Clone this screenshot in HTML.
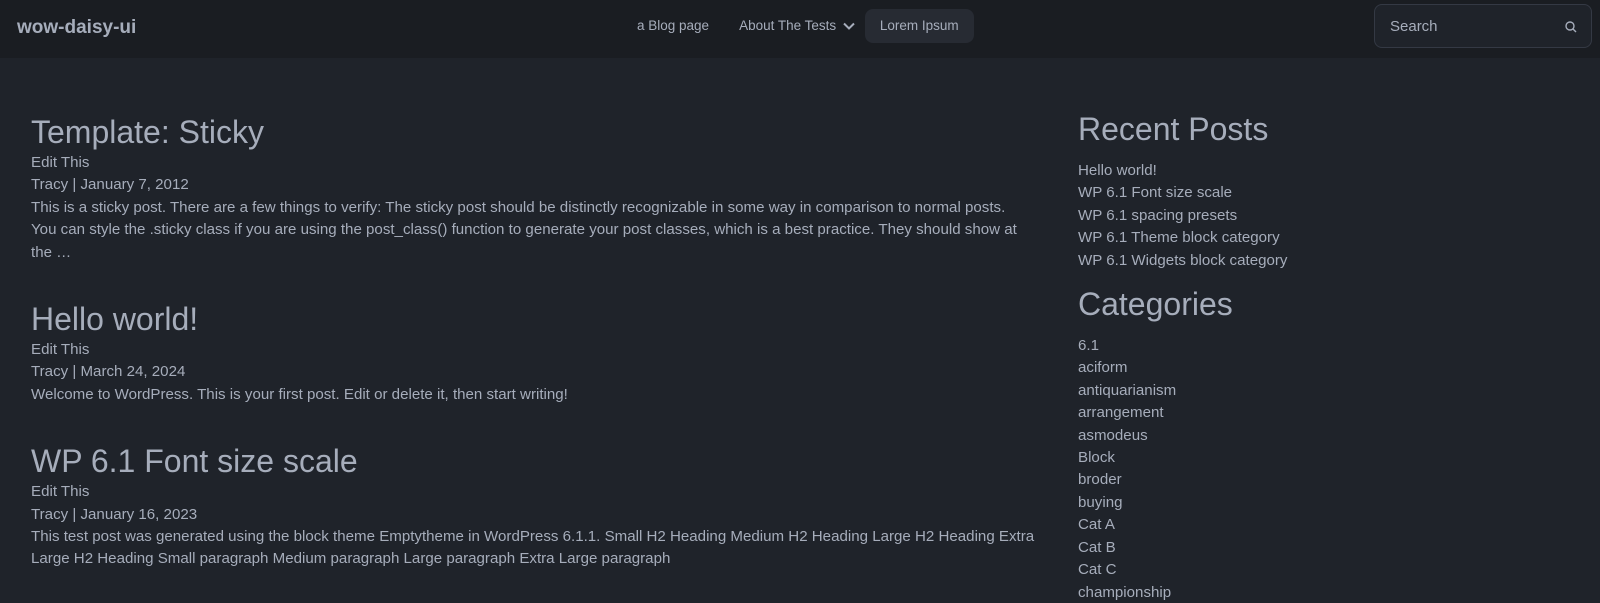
<!DOCTYPE html>
<html><head><meta charset="utf-8"><style>
*{box-sizing:border-box;margin:0;padding:0}
html,body{width:1600px;height:603px;overflow:hidden}
body{background:#1f232a;color:#a6adbb;font-family:"Liberation Sans",sans-serif;font-size:15.1px;line-height:22.4px;position:relative}
.hdr{height:58px;background:#1a1d22;position:relative}
.logo{position:absolute;left:17px;top:16px;font-size:19px;font-weight:bold;line-height:24px;color:#a6adbb}
.nav{position:absolute;top:9px;left:622px;display:flex;font-size:13.5px;line-height:34px}
.nav div{padding:0 15px;border-radius:8px}
.nav .act{background:#272b33;margin-left:-5px}
.search{position:absolute;left:1374px;top:4px;width:218px;height:44px;border:1px solid #343944;border-radius:8px;background:#1f232a;font-size:15px;line-height:44px;padding-left:15px;color:#a6adbb}
.search svg{position:absolute;right:14px;top:16px}
.main{position:absolute;left:31px;top:112px;width:1040px;white-space:nowrap}
.side{position:absolute;left:1078px;top:107px}
h1{font-size:32px;font-weight:normal;line-height:40px;color:#a6adbb}
h2{font-size:32px;font-weight:normal;line-height:44px;color:#a6adbb;margin-bottom:9px}
.post{margin-bottom:35px}
</style></head><body>
<div class="hdr"><div class="logo">wow-daisy-ui</div>
<div class="nav"><div>a Blog page</div><div>About The Tests <svg width="12" height="8" viewBox="0 0 12 8" style="margin-left:3px"><path d="M1 1.5l5 5 5-5" fill="none" stroke="#a6adbb" stroke-width="2"/></svg></div><div class="act">Lorem Ipsum</div></div>
<div class="search">Search<svg width="12" height="12" viewBox="0 0 12 12"><circle cx="5" cy="5" r="4" fill="none" stroke="#a6adbb" stroke-width="1.4"/><path d="M8 8l3 3" stroke="#a6adbb" stroke-width="1.4"/></svg></div></div>
<div class="main">
<div class="post"><h1>Template: Sticky</h1><div>Edit This</div><div>Tracy | January 7, 2012</div><div>This is a sticky post. There are a few things to verify: The sticky post should be distinctly recognizable in some way in comparison to normal posts.<br>You can style the .sticky class if you are using the post_class() function to generate your post classes, which is a best practice. They should show at<br>the …</div></div>
<div class="post"><h1>Hello world!</h1><div>Edit This</div><div>Tracy | March 24, 2024</div><div>Welcome to WordPress. This is your first post. Edit or delete it, then start writing!</div></div>
<div class="post"><h1>WP 6.1 Font size scale</h1><div>Edit This</div><div>Tracy | January 16, 2023</div><div>This test post was generated using the block theme Emptytheme in WordPress 6.1.1. Small H2 Heading Medium H2 Heading Large H2 Heading Extra<br>Large H2 Heading Small paragraph Medium paragraph Large paragraph Extra Large paragraph</div></div>
</div>
<div class="side">
<h2>Recent Posts</h2>
<div style="margin-bottom:10px">Hello world!<br>WP 6.1 Font size scale<br>WP 6.1 spacing presets<br>WP 6.1 Theme block category<br>WP 6.1 Widgets block category</div>
<h2>Categories</h2>
<div>6.1<br>aciform<br>antiquarianism<br>arrangement<br>asmodeus<br>Block<br>broder<br>buying<br>Cat A<br>Cat B<br>Cat C<br>championship</div>
</div>
</body></html>
